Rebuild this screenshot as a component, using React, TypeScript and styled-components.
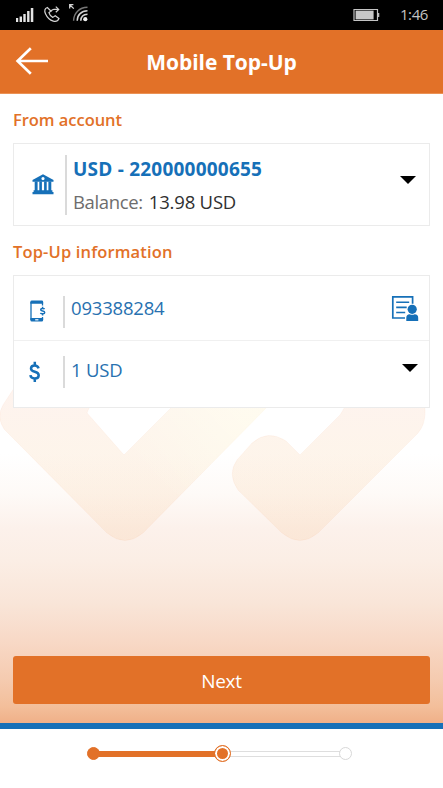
import React from 'react';
import styled, { createGlobalStyle } from 'styled-components';

const ORANGE = '#e27128';
const BLUE = '#1670b8';

const GlobalStyle = createGlobalStyle`
  * { box-sizing: border-box; }
  body { margin: 0; background: #fff; font-family: "Open Sans", "Noto Sans", sans-serif; }
  svg { display: block; flex: none; }
`;

const Screen = styled.div`
  width: 443px;
  height: 788px;
  display: flex;
  flex-direction: column;
  overflow: hidden;
  background: #fff;
`;

const StatusBar = styled.div`
  height: 30px;
  flex: none;
  display: flex;
  align-items: flex-start;
  justify-content: space-between;
  background: #000;
  color: #c4c4c4;
`;

const StatusRight = styled.div`
  display: flex;
  gap: 20px;
  padding-right: 15px;
`;

const Clock = styled.span`
  font-size: 15px;
  line-height: 29px;
  letter-spacing: -0.4px;
`;

const Header = styled.header`
  height: 64px;
  flex: none;
  display: grid;
  grid-template-columns: 50px 1fr 50px;
  align-items: center;
  background: ${ORANGE};
  border-bottom: 1px solid #eb9255;
`;

const BackButton = styled.button`
  display: flex;
  padding: 0 0 2px 15px;
  border: 0;
  background: none;
`;

const Title = styled.h1`
  margin: 1px 0 0;
  font-size: 21px;
  line-height: 30px;
  font-weight: 700;
  letter-spacing: -0.05px;
  text-align: center;
  color: #fff;
`;

const Content = styled.main`
  flex: 1;
  display: grid;
  background: linear-gradient(180deg, #fff 0, #fff 360px, #fefaf7 400px, #fcf1eb 435px, #fbeee5 466px, #f9e5d8 510px, #f8d9c7 546px, #f5cbb0 585px, #f3bf9b 612px, #f0b088 629px);
`;

const Watermark = styled.svg`
  grid-area: 1 / 1;
`;

const Form = styled.div`
  grid-area: 1 / 1;
  z-index: 1;
  display: flex;
  flex-direction: column;
  padding: 12px 13px 19px;
`;

const SectionTitle = styled.h2<{ $gap?: number; $tracking?: number }>`
  margin: ${({ $gap = 0 }) => $gap}px 0 0;
  height: 37px;
  font-size: 16.5px;
  line-height: 27px;
  font-weight: 600;
  letter-spacing: ${({ $tracking = 0 }) => $tracking}px;
  color: ${ORANGE};
`;

const Card = styled.section`
  border: 1px solid #ebebeb;
  background: #fff;
`;

const Row = styled.div<{ $height: number; $divided?: boolean; $lift?: number }>`
  height: ${({ $height }) => $height}px;
  display: flex;
  align-items: center;
  padding-bottom: ${({ $lift = 0 }) => $lift}px;
  border-bottom: ${({ $divided }) => ($divided ? '1px solid #f0f0f0' : '0')};
`;

const IconCell = styled.div<{ $width: number; $inset: number; $drop?: number }>`
  width: ${({ $width }) => $width}px;
  flex: none;
  padding-left: ${({ $inset }) => $inset}px;
  padding-top: ${({ $drop = 0 }) => $drop}px;
  color: ${BLUE};
`;

const Separator = styled.i<{ $height: number; $drop?: number }>`
  width: 2px;
  height: ${({ $height }) => $height}px;
  margin-top: ${({ $drop = 0 }) => $drop}px;
  background: #dadada;
`;

const Account = styled.div`
  flex: 1;
  padding-left: 6px;
`;

const AccountNumber = styled.div`
  padding-top: 1px;
  font-size: 19px;
  line-height: 33px;
  font-weight: 700;
  letter-spacing: 0.22px;
  color: ${BLUE};
`;

const Balance = styled.div`
  display: flex;
  gap: 6px;
  font-size: 18.5px;
  line-height: 32px;
  letter-spacing: -0.2px;
  color: #303030;
`;

const BalanceLabel = styled.span`
  color: #6d6d6d;
  letter-spacing: -0.35px;
`;

const Value = styled.div<{ $lift?: number }>`
  flex: 1;
  padding: 0 0 ${({ $lift = 0 }) => $lift}px 6px;
  font-size: 18.5px;
  line-height: 28px;
  letter-spacing: -0.2px;
  color: #2871b0;
`;

const Trailing = styled.div<{ $right: number; $lift?: number }>`
  padding-right: ${({ $right }) => $right}px;
  padding-bottom: ${({ $lift = 0 }) => $lift}px;
  color: ${BLUE};
`;

const NextButton = styled.button`
  height: 48px;
  margin-top: auto;
  padding: 2px 0 0;
  border: 0;
  border-radius: 3px;
  background: ${ORANGE};
  color: #fff;
  font: 400 19px/28px "Open Sans", "Noto Sans", sans-serif;
  letter-spacing: -0.3px;
`;

const Footer = styled.footer`
  height: 65px;
  flex: none;
  display: flex;
  justify-content: center;
  align-items: flex-start;
  padding-top: 16px;
  border-top: 6px solid ${BLUE};
  background: #fff;
`;

const Steps = styled.div`
  width: 265px;
  height: 17px;
  display: flex;
  align-items: center;
  margin-right: 4px;
`;

const Step = styled.i<{ $state: 'done' | 'current' | 'todo' }>`
  flex: none;
  z-index: 1;
  width: ${({ $state }) => ($state === 'current' ? 17 : 13)}px;
  height: ${({ $state }) => ($state === 'current' ? 17 : 13)}px;
  border-radius: 50%;
  border: 1px solid ${({ $state }) => ($state === 'todo' ? '#d8d8d8' : ORANGE)};
  background: ${({ $state }) => ($state === 'todo' ? '#fff' : ORANGE)};
  box-shadow: ${({ $state }) => ($state === 'current' ? 'inset 0 0 0 2px #fff' : 'none')};
`;

const Track = styled.i<{ $done?: boolean }>`
  flex: ${({ $done }) => ($done ? 116 : 110)};
  height: 6px;
  margin: 0 -1px;
  background: ${({ $done }) => ($done ? ORANGE : '#fff')};
  border: solid ${({ $done }) => ($done ? ORANGE : '#dedede')};
  border-width: 1px 0;
`;

const StatusIcons = () => (
  <svg width="96" height="28" viewBox="0 0 96 28" fill="none" stroke="#d4d4d4">
    <g fill="#e4e4e4" stroke="none">
      <path d="M16 18h2.2v4H16zM19.600 16.500h2.400V22h-2.400zM23.300 14h2.400v8h-2.400zM27.100 11h2.400v11h-2.400zM30.800 8h2.500v14h-2.500z" />
    </g>
    <path strokeWidth="1.200" d="M47.300 7.500c-2.500.8-3.200 3.200-1.800 6.200 1.500 3.400 4.700 6.500 7.800 7.400 2.300.7 4.700-.3 5.700-2.600l-3.800-2.800-2.400 1.700c-1.800-.9-3.300-2.700-3.900-4.700l2-1.700zM51 11.500c.5-1.500 1.400-2.100 2.800-2.100h4.600M55.800 6.600l2.900 2.800-2.900 2.800" />
    <path strokeWidth="1.300" d="M69.700 8.500V4.700h3.700M70 5l3.800 3.600" />
    <circle cx="85.300" cy="19.200" r="2.100" fill="#eee" stroke="none" />
    <path strokeWidth="1.600" d="M80.800 20.700c.1-3.700 2.600-6.400 6.700-6.500" />
    <path strokeWidth="1.500" d="M77.200 20.700c.1-5.800 4.100-9.800 10.300-9.900" />
    <path strokeWidth="1.400" stroke="#777" d="M73.600 20.700C73.800 13 79.300 7.500 87.500 7.300" />
  </svg>
);

const Battery = () => (
  <svg width="27" height="28" viewBox="0 0 27 28">
    <path d="M1 9.500h23.500v11H1z" fill="none" stroke="#c4c4c4" strokeWidth="1.200" />
    <path d="M2.600 10.600h18v8.800h-18z" fill="#c8c8c8" />
    <path d="M25 13h1.300v4H25z" fill="#bbb" />
  </svg>
);

const BackArrow = () => (
  <svg width="34" height="30" viewBox="0 0 34 30" fill="none" stroke="#fff" strokeWidth="2.700">
    <path d="M2.500 15H33M15.800 2.200 2.600 15l13.200 12.800" />
  </svg>
);

const Bank = () => (
  <svg width="22" height="21" viewBox="0 0 22 21" fill="currentColor">
    <path fillRule="evenodd" d="M11 .3 21.500 6v1.800H.5V6zM11 3a1.600 1.600 0 1 0 0 3.200A1.600 1.600 0 0 0 11 3z" />
    <path d="M2.700 7.600h2.900v9H2.700zM7.300 7.600h2.600v9H7.300zM12.100 7.600h2.600v9h-2.600zM16.400 7.600h2.900v9h-2.900zM1.600 16.300h18.800v2H1.600zM.5 18.100h21v2.100H.5z" />
  </svg>
);

const PhoneDollar = () => (
  <svg width="16" height="22" viewBox="0 0 16 22" fill="none" stroke="currentColor">
    <path strokeWidth="1.300" d="M12.500 5.500V2M1 2v18M12.500 17v3" />
    <path fill="currentColor" stroke="none" d="M.4 1.500Q.5.4 1.800.4h10Q13.100.4 13.100 1.500V3.700H.4zM.4 18h12.700v2.300q0 1.300-1.300 1.300h-10Q.4 21.600.4 20.300z" />
    <path stroke="#fff" strokeWidth="1.200" d="M5.200 19.800h3.200" />
    <path strokeWidth="1.500" d="M14.600 9.100c-.6-.8-3.900-1-3.900.7 0 1.800 4 .8 4 2.700 0 1.700-3.400 1.600-4.300.5M12.600 6.700v1.900M12.600 13.600v1.800" />
  </svg>
);

const Dollar = () => (
  <svg width="12" height="22" viewBox="0 0 12 22" fill="none" stroke="currentColor" strokeWidth="2.500">
    <path d="M9.600 7.300C8.900 5.200 7.600 4.400 5.800 4.400c-2.300 0-3.800 1.200-3.800 3 0 4.500 7.700 2.200 7.700 6.800 0 2-1.500 3.300-3.900 3.300-2.400 0-4.100-1.100-4.400-3.300M5.800.8v3.500M5.800 17.400v3.500" />
  </svg>
);

const Contact = () => (
  <svg width="28" height="27" viewBox="0 0 28 27">
    <path d="M14 23H1.800V1.800h19.800v7" fill="none" stroke="currentColor" strokeWidth="1.700" />
    <path d="M5.200 7.200h13M5.200 12.400h10.500M5.200 17.500h9" stroke="currentColor" strokeWidth="1.600" />
    <circle cx="21.200" cy="14.300" r="4.600" fill="currentColor" />
    <path d="M15.300 26v-3.300q0-3.500 3.400-3.500 2.500 1.200 5 0 3.500 0 3.500 3.500V26z" fill="currentColor" />
  </svg>
);

const Caret = () => (
  <svg width="16" height="8" viewBox="0 0 16 8" fill="#000"><path d="M0 0h16L8 8z" /></svg>
);

export default function App() {
  return (
    <>
      <GlobalStyle />
      <Screen>
        <StatusBar>
          <StatusIcons />
          <StatusRight>
            <Battery />
            <Clock>1:46</Clock>
          </StatusRight>
        </StatusBar>
        <Header>
          <BackButton aria-label="Back"><BackArrow /></BackButton>
          <Title>Mobile Top-Up</Title>
        </Header>
        <Content>
          <Watermark width="443" height="629" viewBox="0 94 443 629">
            <defs>
              <linearGradient id="mark" gradientUnits="userSpaceOnUse" x1="0" y1="390" x2="0" y2="541">
                <stop offset="0" stopColor="#f59468" stopOpacity=".11" />
                <stop offset=".4" stopColor="#f3a757" stopOpacity=".12" />
                <stop offset="1" stopColor="#f3a757" stopOpacity=".12" />
              </linearGradient>
              <linearGradient id="glow" gradientUnits="userSpaceOnUse" x1="232" y1="400" x2="150" y2="478">
                <stop offset="0" stopColor="#fffff0" stopOpacity=".65" />
                <stop offset="1" stopColor="#fffff0" stopOpacity="0" />
              </linearGradient>
            </defs>
            <g fill="url(#mark)" stroke="#f39b70" strokeOpacity=".07">
              <path d="M18 382 3 405Q-4 417 4 429L107 533Q125 548 143 533L266 408 292 382H197L124 455 87 413 100 382z" />
              <path d="M360 382 340 415 300 455 286 441Q268 429 252 443L237 460Q227 474 238 490L282 533Q300 548 318 533L418 433Q426 424 425 408L420 382z" />
            </g>
            <path d="M197 382h95L180 496 124 455z" fill="url(#glow)" />
          </Watermark>
          <Form>
            <SectionTitle $tracking={-0.04}>From account</SectionTitle>
            <Card>
              <Row $height={81}>
                <IconCell $width={51} $inset={18}><Bank /></IconCell>
                <Separator $height={60} />
                <Account>
                  <AccountNumber>USD - 220000000655</AccountNumber>
                  <Balance><BalanceLabel>Balance:</BalanceLabel><span>13.98 USD</span></Balance>
                </Account>
                <Trailing $right={13} $lift={9}><Caret /></Trailing>
              </Row>
            </Card>
            <SectionTitle $gap={12} $tracking={0.14}>Top-Up information</SectionTitle>
            <Card>
              <Row $height={65} $divided>
                <IconCell $width={49} $inset={16} $drop={6}><PhoneDollar /></IconCell>
                <Separator $height={32} $drop={7} />
                <Value>093388284</Value>
                <Trailing $right={10}><Contact /></Trailing>
              </Row>
              <Row $height={66} $lift={4}>
                <IconCell $width={49} $inset={15}><Dollar /></IconCell>
                <Separator $height={32} />
                <Value $lift={5}>1 USD</Value>
                <Trailing $right={11} $lift={9}><Caret /></Trailing>
              </Row>
            </Card>
            <NextButton>Next</NextButton>
          </Form>
        </Content>
        <Footer>
          <Steps>
            <Step $state="done" />
            <Track $done />
            <Step $state="current" />
            <Track />
            <Step $state="todo" />
          </Steps>
        </Footer>
      </Screen>
    </>
  );
}
